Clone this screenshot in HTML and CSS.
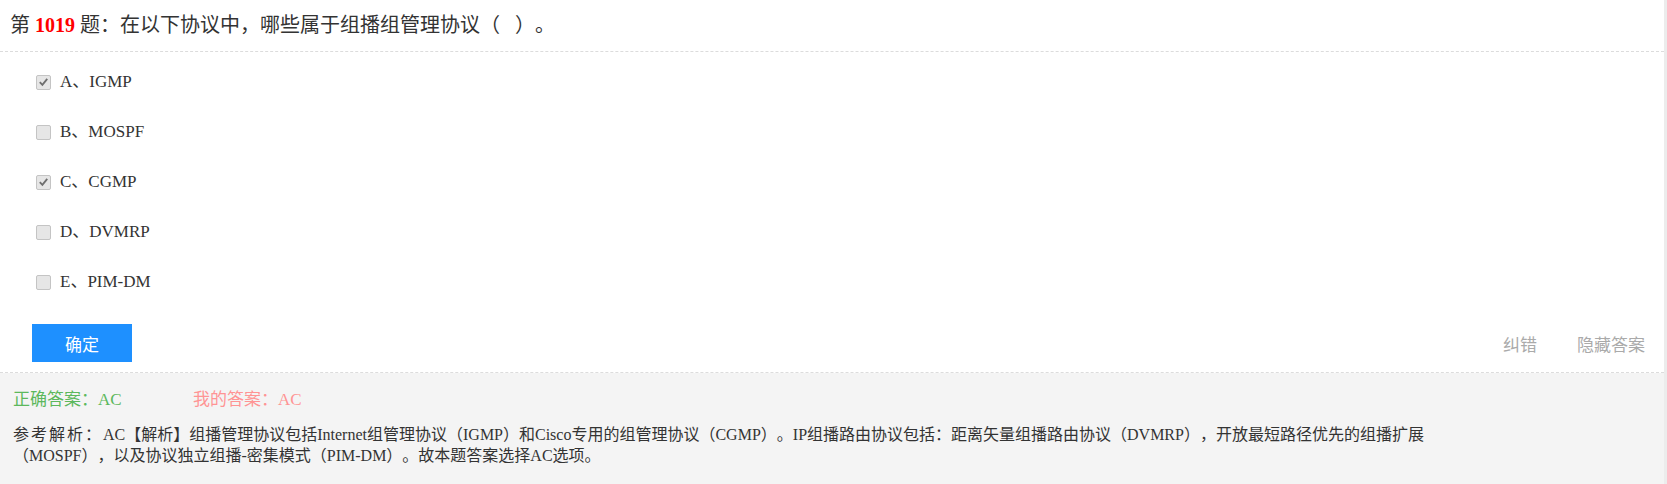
FILE: index.html
```html
<!DOCTYPE html>
<html lang="zh-CN">
<head>
<meta charset="utf-8">
<title>第1019题</title>
<link rel="stylesheet" href="styles.css">
</head>
<body>
<div class="page">
  <div class="card">
    <div class="title">第 <span class="qno">1019</span> 题：在以下协议中，哪些属于组播组管理协议（&nbsp;&nbsp;&nbsp;）。</div>
    <ul class="options">
      <li class="option"><span class="box checked"><svg viewBox="0 0 14 14" width="14" height="14"><path d="M3 7.2 L5.8 10 L11 3.6" fill="none" stroke="#6f6f6f" stroke-width="2"/></svg></span><span class="label">A、IGMP</span></li>
      <li class="option"><span class="box"></span><span class="label">B、MOSPF</span></li>
      <li class="option"><span class="box checked"><svg viewBox="0 0 14 14" width="14" height="14"><path d="M3 7.2 L5.8 10 L11 3.6" fill="none" stroke="#6f6f6f" stroke-width="2"/></svg></span><span class="label">C、CGMP</span></li>
      <li class="option"><span class="box"></span><span class="label">D、DVMRP</span></li>
      <li class="option"><span class="box"></span><span class="label">E、PIM-DM</span></li>
    </ul>
    <div class="actions">
      <button class="submit" type="button">确定</button>
      <div class="links">
        <span class="link">纠错</span>
        <span class="link">隐藏答案</span>
      </div>
    </div>
  </div>
  <div class="answer">
    <div class="result">
      <span class="right">正确答案：AC</span>
      <span class="mine">我的答案：AC</span>
    </div>
    <div class="analysis"><span class="tag">参考解析：</span>AC【解析】组播管理协议包括Internet组管理协议（IGMP）和Cisco专用的组管理协议（CGMP）。IP组播路由协议包括：距离矢量组播路由协议（DVMRP），开放最短路径优先的组播扩展<br>（MOSPF），以及协议独立组播-密集模式（PIM-DM）。故本题答案选择AC选项。</div>
  </div>
</div>
</body>
</html>
```
FILE: styles.css
```css
html, body {
  margin: 0;
  padding: 0;
}
body {
  background: #ececec;
  font-family: "Liberation Serif", "Noto Sans CJK SC", serif;
  color: #333;
  width: 1667px;
  height: 484px;
  overflow: hidden;
  text-spacing-trim: space-all;
  font-kerning: none;
}
.page {
  width: 1664px;
}
.card {
  background: #fff;
  border-bottom: 1px dashed #dcdcdc;
}
.title {
  height: 52px;
  line-height: 50px;
  padding-left: 10px;
  font-size: 20px;
  border-bottom: 1px dashed #dcdcdc;
  box-sizing: border-box;
}
.qno {
  color: #ff0000;
  font-weight: bold;
}
.options {
  list-style: none;
  margin: 0;
  padding: 5px 0 0 36px;
}
.option {
  height: 50px;
  display: flex;
  align-items: center;
  font-size: 17px;
}
.box {
  width: 13px;
  height: 13px;
  border: 1px solid #c4c4c4;
  background: #e6e6e6;
  border-radius: 2px;
  margin-right: 9px;
  display: flex;
  align-items: center;
  justify-content: center;
  flex: none;
}
.box svg {
  display: block;
}
.label {
  line-height: 20px;
}
.actions {
  display: flex;
  align-items: center;
  justify-content: space-between;
  padding: 17px 19px 10px 32px;
}
.submit {
  width: 100px;
  height: 38px;
  border: none;
  background: #1e90ff;
  color: #fff;
  font-family: "Noto Sans CJK SC", sans-serif;
  font-size: 17px;
  padding: 0;
  margin: 0;
}
.links {
  display: flex;
  gap: 40px;
}
.link {
  color: #aaa;
  font-family: "Noto Sans CJK SC", sans-serif;
  font-size: 17px;
}
.answer {
  background: #f4f4f4;
  padding: 15px 0 0 13px;
  height: 111px;
  box-sizing: border-box;
}
.result {
  display: flex;
  height: 24px;
  line-height: 24px;
  font-size: 17px;
}
.right {
  color: #5cb85c;
  width: 180px;
}
.mine {
  color: #ff9494;
}
.analysis {
  margin-top: 12px;
  font-size: 16px;
  line-height: 21px;
  color: #333;
}
.tag {
  letter-spacing: 2px;
}
```
